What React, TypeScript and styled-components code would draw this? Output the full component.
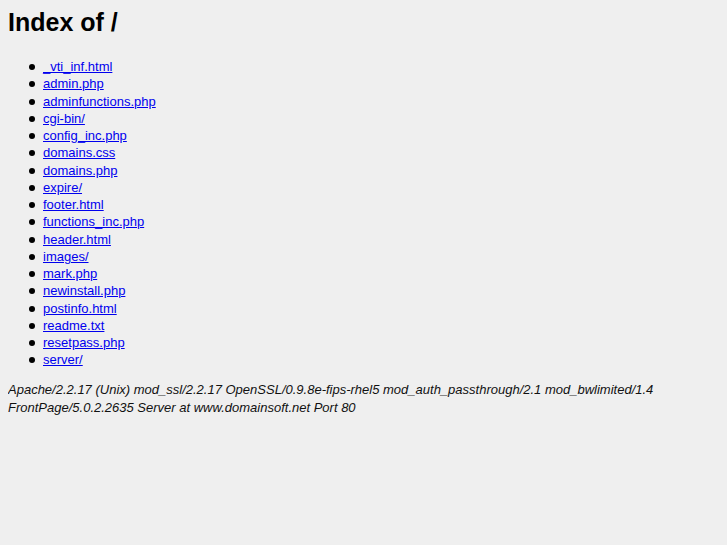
import React from "react";
import styled, { createGlobalStyle } from "styled-components";

const Global = createGlobalStyle`
  html, body { background: #efefef; }
  body {
    margin: 8px;
    font-family: "Liberation Sans", Arial, sans-serif;
    font-size: 13px;
    color: #000;
  }
`;

const Title = styled.h1`
  margin: 0;
  font-size: 25px;
  font-weight: bold;
  line-height: 29px;
`;

const List = styled.ul`
  margin: 21px 0 12px;
  padding-left: 35px;
  list-style: none;
`;

const Item = styled.li`
  position: relative;
  line-height: 17.25px;
  &::before {
    content: "";
    position: absolute;
    left: -14px;
    top: 6px;
    width: 6px;
    height: 6px;
    border-radius: 50%;
    background: #000;
  }
`;

const Link = styled.a`
  color: #0000ee;
  text-decoration: underline;
`;

const Footer = styled.address`
  font-style: italic;
  line-height: 18px;
  color: #111;
`;

const files = [
  "_vti_inf.html",
  "admin.php",
  "adminfunctions.php",
  "cgi-bin/",
  "config_inc.php",
  "domains.css",
  "domains.php",
  "expire/",
  "footer.html",
  "functions_inc.php",
  "header.html",
  "images/",
  "mark.php",
  "newinstall.php",
  "postinfo.html",
  "readme.txt",
  "resetpass.php",
  "server/",
];

export default function App() {
  return (
    <>
      <Global />
      <Title>Index of /</Title>
      <List>
        {files.map((f) => (
          <Item key={f}>
            <Link href={f}>{f}</Link>
          </Item>
        ))}
      </List>
      <Footer>
        Apache/2.2.17 (Unix) mod_ssl/2.2.17 OpenSSL/0.9.8e-fips-rhel5 mod_auth_passthrough/2.1 mod_bwlimited/1.4
        <br />
        FrontPage/5.0.2.2635 Server at www.domainsoft.net Port 80
      </Footer>
    </>
  );
}
